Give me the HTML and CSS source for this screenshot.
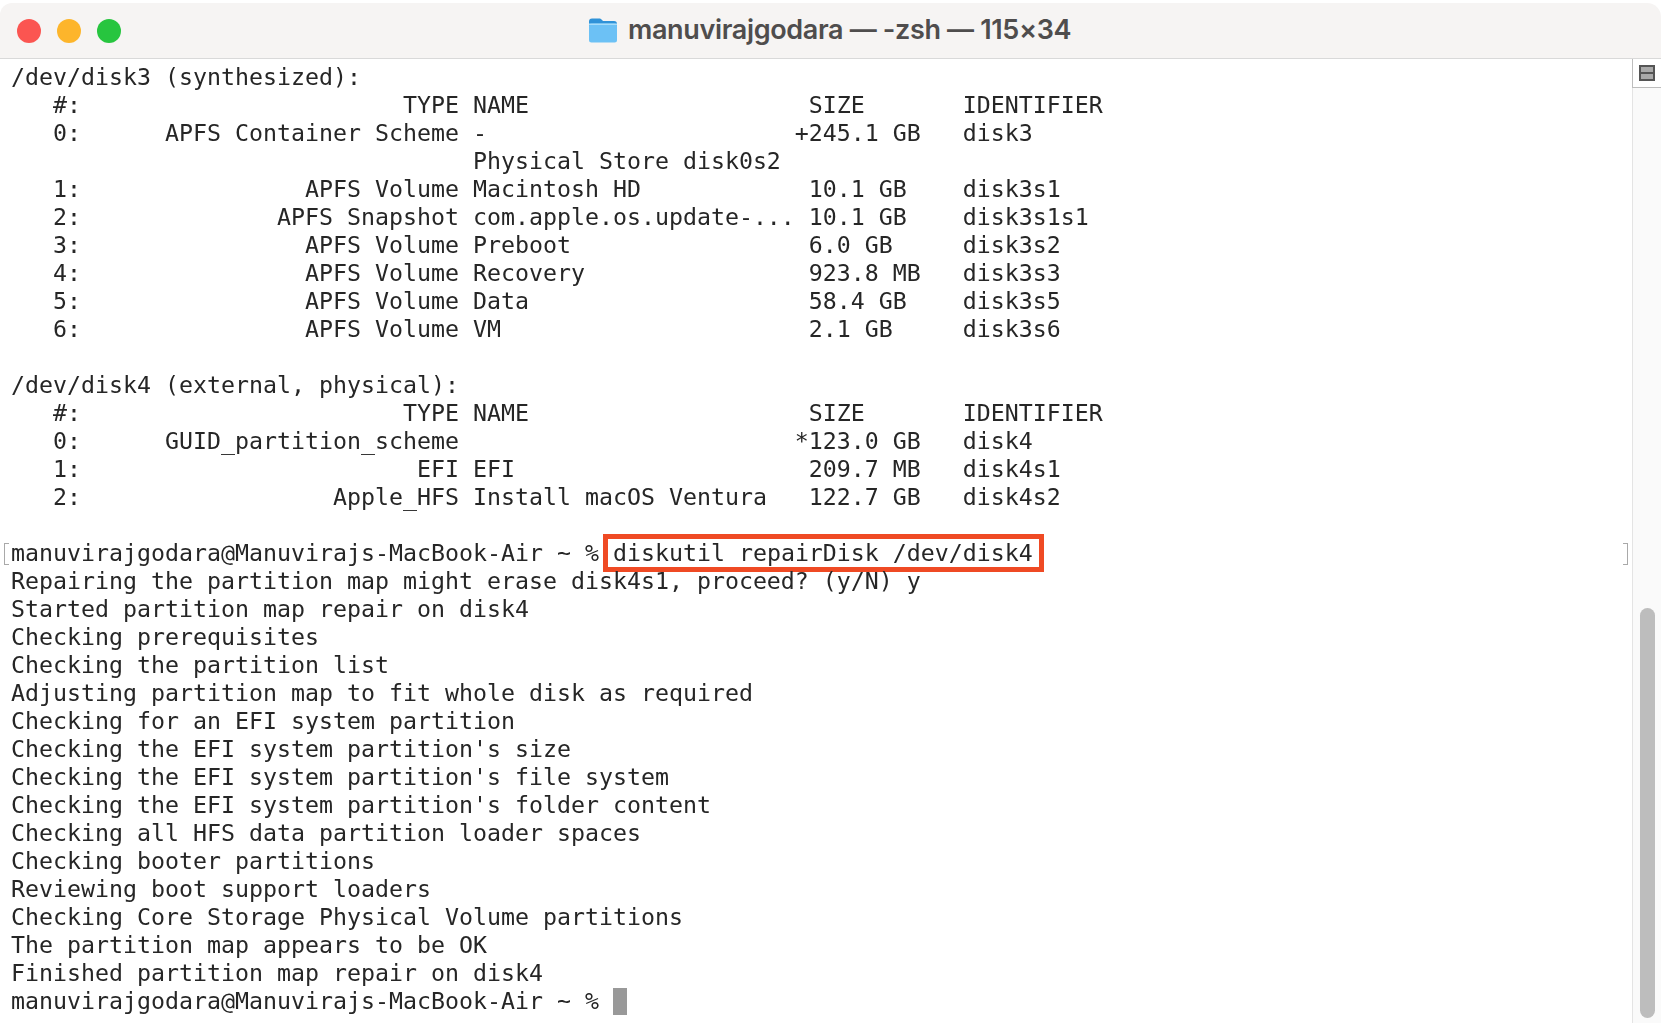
FILE: index.html
```html
<!DOCTYPE html>
<html lang="en">
<head>
<meta charset="utf-8">
<title>manuvirajgodara — -zsh — 115×34</title>
<link rel="stylesheet" href="styles.css">
</head>
<body>
<div class="window">
  <header class="titlebar">
    <div class="lights">
      <span class="light red"></span>
      <span class="light yellow"></span>
      <span class="light green"></span>
    </div>
    <div class="title">
      <svg class="folder" viewBox="0 0 30 28" aria-hidden="true">
        <path d="M1 5.5C1 3.5 2 2.5 4 2.5h7c1.300 0 2 .4 2.800 1.300L15 5h11c2 0 3 1 3 3v2H1z" fill="#2f92d8"/>
        <rect x="1" y="7.500" width="28" height="19" rx="2.500" fill="#6cc1f5"/>
        <rect x="1" y="7.500" width="28" height="1.500" fill="#a6dcfa"/>
      </svg>
      <span>manuvirajgodara — -zsh — 115×34</span>
    </div>
  </header>
  <div class="content">
    <main class="term">
      <div class="line">/dev/disk3 (synthesized):</div>
      <div class="line">   #:                       TYPE NAME                    SIZE       IDENTIFIER</div>
      <div class="line">   0:      APFS Container Scheme -                      +245.1 GB   disk3</div>
      <div class="line">                                 Physical Store disk0s2</div>
      <div class="line">   1:                APFS Volume Macintosh HD            10.1 GB    disk3s1</div>
      <div class="line">   2:              APFS Snapshot com.apple.os.update-... 10.1 GB    disk3s1s1</div>
      <div class="line">   3:                APFS Volume Preboot                 6.0 GB     disk3s2</div>
      <div class="line">   4:                APFS Volume Recovery                923.8 MB   disk3s3</div>
      <div class="line">   5:                APFS Volume Data                    58.4 GB    disk3s5</div>
      <div class="line">   6:                APFS Volume VM                      2.1 GB     disk3s6</div>
      <div class="line"> </div>
      <div class="line">/dev/disk4 (external, physical):</div>
      <div class="line">   #:                       TYPE NAME                    SIZE       IDENTIFIER</div>
      <div class="line">   0:      GUID_partition_scheme                        *123.0 GB   disk4</div>
      <div class="line">   1:                        EFI EFI                     209.7 MB   disk4s1</div>
      <div class="line">   2:                  Apple_HFS Install macOS Ventura   122.7 GB   disk4s2</div>
      <div class="line"> </div>
      <div class="line marked">manuvirajgodara@Manuvirajs-MacBook-Air ~ % <span class="highlight">diskutil repairDisk /dev/disk4</span></div>
      <div class="line">Repairing the partition map might erase disk4s1, proceed? (y/N) y</div>
      <div class="line">Started partition map repair on disk4</div>
      <div class="line">Checking prerequisites</div>
      <div class="line">Checking the partition list</div>
      <div class="line">Adjusting partition map to fit whole disk as required</div>
      <div class="line">Checking for an EFI system partition</div>
      <div class="line">Checking the EFI system partition's size</div>
      <div class="line">Checking the EFI system partition's file system</div>
      <div class="line">Checking the EFI system partition's folder content</div>
      <div class="line">Checking all HFS data partition loader spaces</div>
      <div class="line">Checking booter partitions</div>
      <div class="line">Reviewing boot support loaders</div>
      <div class="line">Checking Core Storage Physical Volume partitions</div>
      <div class="line">The partition map appears to be OK</div>
      <div class="line">Finished partition map repair on disk4</div>
      <div class="line">manuvirajgodara@Manuvirajs-MacBook-Air ~ % <span class="cursor"></span></div>
    </main>
    <aside class="scrollcol">
      <div class="split"><span class="split-icon"></span></div>
      <div class="track"><div class="thumb"></div></div>
    </aside>
  </div>
</div>
</body>
</html>
```
FILE: styles.css
```css
* { box-sizing: border-box; }
html, body { margin: 0; height: 100%; background: #fff; overflow: hidden; }
.window { height: 100%; padding-top: 3px; display: flex; flex-direction: column; filter: blur(.45px); }
.titlebar {
  height: 56px; flex: none; display: flex; align-items: center; position: relative;
  background: #f6f4f3; border-bottom: 1px solid #d9d9d9;
  border-radius: 12px 14px 0 0; padding-left: 17px;
}
.lights { display: flex; gap: 16px; }
.light { width: 24px; height: 24px; border-radius: 50%; }
.red { background: #fb5551; }
.yellow { background: #fdb52b; }
.green { background: #27c53f; }
.title {
  position: absolute; left: 588px; top: 10px; display: flex; align-items: center; gap: 10px;
  font: 600 27px/34px "Inter", "Liberation Sans", sans-serif; color: #4f4d4d; letter-spacing: -.35px;
}
.folder { width: 30px; height: 28px; }
.content { flex: 1; display: flex; min-height: 0; }
.term {
  flex: 1; padding: 4px 0 0 11px;
  font: 23.25px/28px "DejaVu Sans Mono", monospace; color: #262626;
}
.line { height: 28px; white-space: pre; position: relative; }
.marked::before, .marked::after {
  content: ""; position: absolute; top: 4px; width: 4px; height: 20px;
  border: 1.500px solid #a9a9a9;
}
.marked::before { left: -7px; border-right: 0; }
.marked::after { left: 1612px; border-left: 0; }
.highlight { position: relative; }
.highlight::after {
  content: ""; position: absolute; left: -9.500px; right: -11px; top: -5.500px; bottom: -5.500px;
  border: 5.500px solid #ef4a24;
}
.cursor {
  display: inline-block; width: 14px; height: 27px; background: #999; vertical-align: -6px;
}
.scrollcol {
  width: 29px; flex: none; display: flex; flex-direction: column;
  background: #fafafa; border-left: 1px solid #e4e4e4;
}
.split {
  height: 29px; flex: none; display: flex; align-items: center; justify-content: center;
  background: #fff; border-bottom: 1.500px solid #bdbdbd; border-left: 1px solid #bdbdbd; margin-left: -1px;
}
.split-icon {
  width: 16px; height: 16px; border: 2px solid #555; background: linear-gradient(#aaa 0 5px, #555 5px 7px, #aaa 7px);
}
.track { flex: 1; padding: 520px 6px 5px 7px; }
.thumb { height: 100%; width: 15px; background: #bdbdbd; border-radius: 8px; }
```
